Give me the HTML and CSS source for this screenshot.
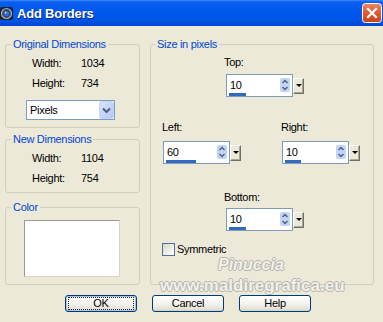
FILE: index.html
```html
<!DOCTYPE html>
<html>
<head>
<meta charset="utf-8">
<link rel="stylesheet" href="styles.css">
</head>
<body>
<div class="window">
  <div class="titlebar">
    <svg class="app-icon" width="14" height="15" viewBox="0 0 14 15">
      <rect x="0" y="1" width="13" height="13" rx="2" fill="#1b2230"/>
      <circle cx="6.5" cy="7.5" r="5" fill="#3a4660" stroke="#9fb1cc" stroke-width="1.2"/>
      <circle cx="6.5" cy="7.5" r="2.6" fill="#2f6fd0"/>
      <circle cx="5.6" cy="6.6" r="0.9" fill="#cfe0ff"/>
    </svg>
    <span class="title">Add Borders</span>
    <svg class="close" width="20" height="20" viewBox="0 0 20 20">
      <defs>
        <linearGradient id="cg" x1="0" y1="0" x2="0" y2="1">
          <stop offset="0" stop-color="#e98a6a"/>
          <stop offset="0.5" stop-color="#df5a33"/>
          <stop offset="1" stop-color="#c9401c"/>
        </linearGradient>
      </defs>
      <rect x="0.5" y="0.5" width="19" height="19" rx="3" fill="url(#cg)" stroke="#ffffff"/>
      <path d="M6 6 L14 14 M14 6 L6 14" stroke="#ffffff" stroke-width="2.2" stroke-linecap="square"/>
    </svg>
  </div>

  <div class="content">
    <div class="main">
      <div class="left-col">
        <fieldset class="group g-orig">
          <legend>Original Dimensions</legend>
          <div class="inner">
            <div class="dim-row"><span class="dim-label">Width:</span><span>1034</span></div>
            <div class="dim-row"><span class="dim-label">Height:</span><span>734</span></div>
            <div class="select">
              <span class="select-text">Pixels</span>
              <svg class="select-btn" width="15" height="18" viewBox="0 0 15 18">
                <defs>
                  <linearGradient id="sg" x1="0" y1="0" x2="1" y2="1">
                    <stop offset="0" stop-color="#dbe6fd"/>
                    <stop offset="1" stop-color="#b1c6f4"/>
                  </linearGradient>
                </defs>
                <rect x="0.5" y="0.5" width="14" height="17" rx="2" fill="url(#sg)" stroke="#c3d3f8"/>
                <path d="M4 7.5 L7.5 11 L11 7.5" fill="none" stroke="#4d6185" stroke-width="2"/>
              </svg>
            </div>
          </div>
        </fieldset>

        <fieldset class="group g-new">
          <legend>New Dimensions</legend>
          <div class="inner">
            <div class="dim-row"><span class="dim-label">Width:</span><span>1104</span></div>
            <div class="dim-row"><span class="dim-label">Height:</span><span>754</span></div>
          </div>
        </fieldset>

        <fieldset class="group g-color">
          <legend>Color</legend>
          <div class="inner">
            <div class="swatch"></div>
          </div>
        </fieldset>
      </div>

      <fieldset class="group g-size">
        <legend>Size in pixels</legend>
        <div class="inner-size">
          <div class="center-block top-block">
            <div class="field-label">Top:</div>
            <div class="spin">
              <div class="edit">
                <div class="val-row"><span class="val">10</span>
                  <svg class="arrows" width="10" height="14" viewBox="0 0 10 14">
                    <rect x="0" y="0" width="10" height="14" rx="2" fill="#c3d4f7"/>
                    <path d="M2.5 5 L5 2.5 L7.5 5" fill="none" stroke="#4d6185" stroke-width="1.5"/>
                    <path d="M2.5 9 L5 11.5 L7.5 9" fill="none" stroke="#4d6185" stroke-width="1.5"/>
                  </svg>
                </div>
                <div class="bar" style="width:17px"></div>
              </div>
              <div class="drop"><span class="tri"></span></div>
            </div>
          </div>

          <div class="lr-row">
            <div class="lr-cell">
              <div class="field-label">Left:</div>
              <div class="spin">
                <div class="edit">
                  <div class="val-row"><span class="val">60</span>
                    <svg class="arrows" width="10" height="14" viewBox="0 0 10 14">
                      <rect x="0" y="0" width="10" height="14" rx="2" fill="#c3d4f7"/>
                      <path d="M2.5 5 L5 2.5 L7.5 5" fill="none" stroke="#4d6185" stroke-width="1.5"/>
                      <path d="M2.5 9 L5 11.5 L7.5 9" fill="none" stroke="#4d6185" stroke-width="1.5"/>
                    </svg>
                  </div>
                  <div class="bar" style="width:30px"></div>
                </div>
                <div class="drop"><span class="tri"></span></div>
              </div>
            </div>
            <div class="lr-cell">
              <div class="field-label">Right:</div>
              <div class="spin">
                <div class="edit">
                  <div class="val-row"><span class="val">10</span>
                    <svg class="arrows" width="10" height="14" viewBox="0 0 10 14">
                      <rect x="0" y="0" width="10" height="14" rx="2" fill="#c3d4f7"/>
                      <path d="M2.5 5 L5 2.5 L7.5 5" fill="none" stroke="#4d6185" stroke-width="1.5"/>
                      <path d="M2.5 9 L5 11.5 L7.5 9" fill="none" stroke="#4d6185" stroke-width="1.5"/>
                    </svg>
                  </div>
                  <div class="bar" style="width:16px"></div>
                </div>
                <div class="drop"><span class="tri"></span></div>
              </div>
            </div>
          </div>

          <div class="center-block bottom-block">
            <div class="field-label">Bottom:</div>
            <div class="spin">
              <div class="edit">
                <div class="val-row"><span class="val">10</span>
                  <svg class="arrows" width="10" height="14" viewBox="0 0 10 14">
                    <rect x="0" y="0" width="10" height="14" rx="2" fill="#c3d4f7"/>
                    <path d="M2.5 5 L5 2.5 L7.5 5" fill="none" stroke="#4d6185" stroke-width="1.5"/>
                    <path d="M2.5 9 L5 11.5 L7.5 9" fill="none" stroke="#4d6185" stroke-width="1.5"/>
                  </svg>
                </div>
                <div class="bar" style="width:17px"></div>
              </div>
              <div class="drop"><span class="tri"></span></div>
            </div>
          </div>

          <div class="check-row">
            <span class="checkbox"></span>
            <span>Symmetric</span>
          </div>
        </div>
      </fieldset>
    </div>

    <div class="buttons">
      <div class="btn default"><span class="focus">OK</span></div>
      <div class="btn"><span class="focus none">Cancel</span></div>
      <div class="btn"><span class="focus none">Help</span></div>
    </div>
  </div>

  <div class="wm wm-name">Pinuccia</div>
  <div class="wm wm-url">www.maldiregrafica.eu</div>
</div>
</body>
</html>
```

FILE: styles.css
```css
* { box-sizing: border-box; }

html, body {
  margin: 0;
  padding: 0;
}

body {
  width: 383px;
  height: 322px;
  overflow: hidden;
  background: #ece9d8;
  font-family: "Liberation Sans", Arial, sans-serif;
  font-size: 11px;
  letter-spacing: -0.3px;
  color: #000;
}

.window {
  position: relative;
  width: 383px;
  height: 322px;
  background: #ece9d8;
}

/* Title bar */
.titlebar {
  height: 26px;
  display: flex;
  align-items: center;
  background: linear-gradient(to bottom, #3d8dff 0, #0a5df0 2px, #0058ee 40%, #0054e3 80%, #0046d6 100%);
}

.app-icon {
  flex: none;
  margin-left: 0;
  margin-top: 1px;
}

.title {
  margin-left: 3px;
  color: #fff;
  font-weight: bold;
  font-size: 13px;
  letter-spacing: -0.2px;
  text-shadow: 1px 1px #0b2a8a;
}

.close {
  flex: none;
  margin-left: auto;
  margin-right: 1px;
}

/* Content */
.content {
  padding: 12px 9px 0 5px;
}

.main {
  display: flex;
  gap: 10px;
}

.left-col {
  width: 135px;
  display: flex;
  flex-direction: column;
}

.group {
  margin: 0;
  padding: 0;
  border: 1px solid #d0d0bf;
  border-radius: 3px;
  min-width: 0;
}

.group legend {
  margin-left: 5px;
  padding: 0 2px;
  line-height: 13px;
  color: #0046d5;
}

.g-orig .inner {
  padding: 2px 0 7px 20px;
}

.g-new {
  margin-top: 5px;
}

.g-new .inner {
  padding: 2px 0 4px 20px;
}

.g-color {
  margin-top: 8px;
}

.g-color .inner {
  padding: 6px 0 7px 18px;
}

.dim-row {
  display: flex;
  height: 20px;
  line-height: 20px;
  margin-left: 6px;
}

.dim-label {
  width: 49px;
}

.select {
  margin-top: 7px;
  width: 89px;
  height: 20px;
  background: #fff;
  border: 1px solid #7f9db9;
  display: flex;
  align-items: center;
  justify-content: space-between;
}

.select-text {
  padding-left: 3px;
  line-height: 18px;
}

.select-btn {
  display: block;
  margin-right: 0;
}

.swatch {
  width: 96px;
  height: 57px;
  background: #fff;
  border: 1px solid #9c9a94;
  border-right-color: #d8d5c8;
  border-bottom-color: #d8d5c8;
}

/* Size in pixels */
.g-size {
  width: 224px;
}

.g-size legend {
  margin-left: 4px;
}

.inner-size {
  padding: 5px 0 0 0;
}

.field-label {
  line-height: 13px;
  height: 13px;
}

.center-block {
  padding-left: 75px;
}

.center-block .field-label {
  margin-left: -2px;
}

.top-block .spin {
  margin-top: 5px;
}

.lr-row {
  display: flex;
  gap: 41px;
  padding-left: 12px;
  margin-top: 24px;
}

.lr-row .field-label {
  margin-left: -1px;
}

.lr-row .spin {
  margin-top: 7px;
}

.bottom-block {
  margin-top: 27px;
}

.bottom-block .spin {
  margin-top: 4px;
}

.spin {
  display: flex;
  align-items: center;
  width: 78px;
}

.edit {
  width: 67px;
  height: 23px;
  background: #fff;
  border: 1px solid #7f9db9;
  display: flex;
  flex-direction: column;
}

.val-row {
  height: 18px;
  padding-top: 2px;
  display: flex;
  align-items: center;
  justify-content: space-between;
}

.val {
  padding-left: 3px;
  line-height: 13px;
}

.arrows {
  display: block;
  margin-right: 2px;
}

.bar {
  height: 3px;
  margin-left: 2px;
  background: #3469c0;
}

.drop {
  width: 11px;
  height: 16px;
  background: #ece9d8;
  border-top: 1px solid #fff;
  border-left: 1px solid #fff;
  border-right: 1px solid #716f64;
  border-bottom: 1px solid #716f64;
  box-shadow: inset -1px -1px 0 #aca899;
  display: flex;
  align-items: center;
  justify-content: center;
}

.tri {
  width: 0;
  height: 0;
  border-left: 3px solid transparent;
  border-right: 3px solid transparent;
  border-top: 3px solid #000;
  margin-top: -1px;
}

.check-row {
  display: flex;
  align-items: center;
  gap: 2px;
  margin-top: 12px;
  padding-left: 11px;
  height: 13px;
  line-height: 13px;
}

.checkbox {
  width: 13px;
  height: 13px;
  border: 1px solid #54709a;
  background: linear-gradient(135deg, #d6d6cf 0%, #f4f4f0 70%, #ffffff 100%);
}

.g-size .inner-size::after {
  content: "";
  display: block;
  height: 28px;
}

/* Buttons */
.buttons {
  display: flex;
  gap: 15px;
  padding-left: 60px;
  margin-top: 10px;
}

.btn {
  width: 72px;
  height: 17px;
  border: 1px solid #003c74;
  border-radius: 3px;
  background: linear-gradient(to bottom, #ffffff 0%, #f4f3ee 50%, #e6e3d9 85%, #d6d0c5 100%);
  padding: 1px 2px;
  display: flex;
}

.btn.default {
  box-shadow: inset 0 0 0 1px #a9c3ee;
}

.focus {
  flex: 1;
  border: 1px dotted #222;
  display: flex;
  align-items: center;
  justify-content: center;
  line-height: 11px;
}

.focus.none {
  border-color: transparent;
}

/* Watermark */
.wm {
  position: absolute;
  font-family: "Liberation Sans", Arial, sans-serif;
  font-weight: bold;
  color: #f4f3ee;
  letter-spacing: 0;
  text-shadow: 1px 0 #a8a8a4, -1px 0 #a8a8a4, 0 1px #a8a8a4, 0 -1px #a8a8a4;
  opacity: 0.8;
  white-space: nowrap;
}

.wm-name {
  left: 218px;
  top: 257px;
  font-size: 16px;
  line-height: 16px;
  font-style: italic;
}

.wm-url {
  left: 160px;
  top: 277px;
  font-size: 17px;
  line-height: 17px;
}
```
